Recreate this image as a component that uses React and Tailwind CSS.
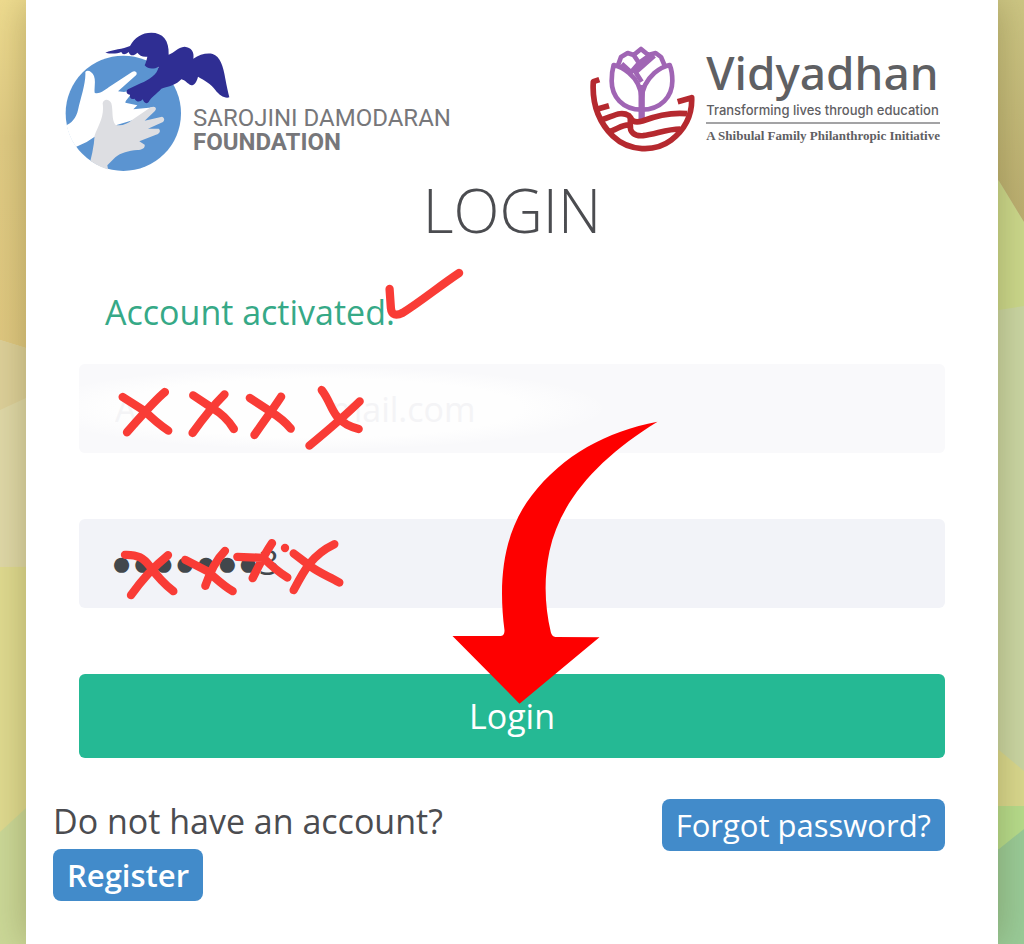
import React, { useState } from 'react';

const Backdrop = () => (
  <svg
    aria-hidden="true"
    viewBox="0 0 1024 944"
    preserveAspectRatio="none"
    className="absolute inset-0 w-full h-full"
  >
    <defs>
      <linearGradient id="sand" x1="0" y1="0" x2="0" y2="1">
        <stop offset="0" stopColor="#efdc90" />
        <stop offset="0.3" stopColor="#e0cb84" />
        <stop offset="1" stopColor="#dfc67e" />
      </linearGradient>
      <linearGradient id="olive" x1="0" y1="0" x2="0" y2="1">
        <stop offset="0" stopColor="#cdc684" />
        <stop offset="1" stopColor="#bbae70" />
      </linearGradient>
    </defs>
    <rect width="512" height="944" fill="#dfd8a8" />
    <path d="M0 0H512V460L26 348L0 340Z" fill="url(#sand)" />
    <path d="M0 340L26 348L512 460V300L26 398L0 410Z" fill="#ddd09a" />
    <path d="M0 567L512 564V944H0Z" fill="#dfda90" />
    <path d="M0 832L26 808L512 500V944H0Z" fill="#cbd898" />
    <rect x="512" width="512" height="944" fill="#cad6a4" />
    <path d="M999 181L1024 222V306L999 310L512 400V0Z" fill="#cbd88c" />
    <path d="M512 0H1024V222L999 181L900 90Z" fill="url(#olive)" />
    <path d="M512 600L999 750L1024 771V806H512Z" fill="#d9d88e" />
    <path d="M512 806H1024V944H512Z" fill="#b6dc8c" />
    <path d="M512 944V900L999 849L1024 829V944Z" fill="#99cb98" />
  </svg>
);

const FoundationLogo = () => (
  <div className="flex items-start">
    <svg viewBox="45 30 495 426" className="w-[165px] h-[142px] shrink-0" aria-hidden="true">
      <defs>
        <clipPath id="globe">
          <circle cx="220" cy="280" r="174" />
        </clipPath>
      </defs>
      <circle cx="220" cy="280" r="173" fill="#5b94d1" />
      <g clipPath="url(#globe)">
        <path
          d="M40 318C62 314 78 296 84 270C92 232 108 190 106 156C112 148 126 154 132 168C138 184 132 204 134 218C144 224 160 214 176 202L246 156C256 150 264 158 258 166L204 214L222 216L250 210C240 232 226 240 226 248L262 256L250 268L312 262C320 266 314 274 306 276L250 300L190 318L150 340L110 366L84 378L30 400Z"
          fill="#ffffff"
        />
        <path
          d="M110 460C124 420 132 380 134 346C144 318 164 290 158 250C160 236 178 236 184 250C190 272 184 298 196 314C212 320 232 312 246 300L302 262C316 256 322 266 314 274L284 302L336 290C346 294 344 306 334 308L294 326L326 326C334 332 328 342 318 344L268 364L284 374C286 384 276 390 262 390C236 392 212 398 196 412L172 436L176 460Z"
          fill="#dddee2"
        />
      </g>
      <path
        d="M166 98C190 88 218 88 240 78C254 52 276 38 304 38C338 38 358 60 356 104C374 98 382 82 404 80C424 82 434 96 430 116C448 104 470 98 488 102C510 108 520 140 526 176C530 198 534 216 538 232C524 236 508 226 496 210C482 190 464 182 444 170C440 186 434 196 424 196C412 192 406 180 394 178C380 194 356 200 334 206C320 222 304 230 296 246C288 254 282 248 278 238C270 248 258 246 254 236C244 240 238 234 240 224C230 224 226 214 234 208L272 190C298 178 322 164 326 140C312 148 294 148 284 136C288 126 290 120 292 110C278 112 268 106 262 98C250 110 240 108 236 96C226 104 218 106 214 96C200 102 182 102 166 98Z"
        fill="#2f2e93"
      />
    </svg>
    <div className="-ml-[37px] mt-[76px] font-['Roboto',sans-serif] text-[24px] leading-6 text-[#77777a] whitespace-nowrap">
      <div>SAROJINI DAMODARAN</div>
      <div className="font-bold">FOUNDATION</div>
    </div>
  </div>
);

const VidyadhanLogo = () => (
  <div className="flex items-start mt-[14px]">
    <svg viewBox="30 27 318 324" className="w-[106px] h-[108px] shrink-0" fill="none" aria-hidden="true">
      <g stroke="#a065b4" strokeWidth="14" strokeLinejoin="round">
        <path d="M188 224C130 224 98 184 98 138C98 118 100 104 104 90C120 94 136 102 150 114C174 134 186 158 188 190C190 158 204 134 226 114C240 102 256 94 272 90C278 104 280 118 280 138C280 184 246 224 188 224Z" />
        <path d="M188 150V252" strokeWidth="19" />
        <path d="M116 94L126 66L146 54L164 60L186 42L208 60L230 54L246 66L258 94" />
        <path d="M164 60L180 84L156 112L128 86M216 58L180 84M226 62L170 112L188 140" />
      </g>
      <g stroke="#b5292f" strokeWidth="17" strokeLinejoin="round">
        <path d="M61 134L43 140C38 214 66 268 102 304C150 350 228 352 276 316C322 280 340 238 338 188L296 200" />
        <path d="M56 222L90 212M68 254C100 246 124 226 150 242C158 256 164 266 190 258C232 242 282 232 324 236" />
        <path d="M88 290C112 286 130 266 154 270C152 290 164 304 192 302C230 298 262 282 304 282M154 242V280" />
      </g>
    </svg>
    <div className="ml-[11px] whitespace-nowrap text-[#5f6063]">
      <div className="font-['Noto_Sans',sans-serif] font-medium text-[46px] leading-[56px]">Vidyadhan</div>
      <div className="font-['Inter',sans-serif] font-medium text-[13px] leading-5">Transforming lives through education</div>
      <div className="mt-[2px] border-t-2 border-[#a3a3a5] font-['Liberation_Serif',serif] font-bold text-[13px] leading-6">
        A Shibulal Family Philanthropic Initiative
      </div>
    </div>
  </div>
);

const CheckStroke = () => (
  <svg
    viewBox="885 20 240 160"
    className="absolute left-full bottom-[12px] -ml-[10px] w-20 h-[53px] pointer-events-none"
    aria-hidden="true"
  >
    <path d="M898 86L902 144C904 166 918 168 938 158C990 126 1048 78 1108 38" fill="none" stroke="#f93c36" strokeWidth="25" strokeLinecap="round" strokeLinejoin="round" />
  </svg>
);

const EmailScribble = () => (
  <svg viewBox="120 70 760 210" className="absolute left-9 top-5 w-[253px] h-[70px] pointer-events-none" aria-hidden="true">
    <g fill="none" stroke="#f93c36" strokeWidth="25" strokeLinecap="round" strokeLinejoin="round">
      <path d="M143 109L208 150C234 176 256 194 280 210M270 94C236 122 198 168 156 215" />
      <path d="M355 104L412 142C446 162 462 180 477 205M449 101C414 136 378 182 353 217" />
      <path d="M525 112L586 152C612 168 632 184 648 204M619 108C594 146 566 184 539 223" />
      <path d="M741 88C762 114 768 144 786 166C806 190 826 198 852 205M855 122C808 168 756 212 704 255" />
    </g>
  </svg>
);

const PasswordScribble = () => (
  <svg viewBox="130 60 690 200" className="absolute left-[39px] top-4 w-[230px] h-[67px] pointer-events-none" aria-hidden="true">
    <g fill="none" stroke="#f93c36" strokeWidth="25" strokeLinecap="round" strokeLinejoin="round">
      <path d="M151 119C190 118 206 128 226 154C248 184 270 208 296 228M280 120C238 154 204 190 169 240" />
      <path d="M332 134L398 168C424 190 446 212 474 228M451 107C424 134 408 164 392 212" />
      <path d="M488 125L566 128C590 152 614 172 638 187M592 84C570 116 552 152 534 189" />
      <path d="M657 115L706 152C734 174 764 184 794 202M779 87C714 118 690 162 657 225" />
      <path d="M631 98V98.5" />
    </g>
  </svg>
);

const Arrow = () => (
  <svg
    viewBox="66 34 617 849"
    className="absolute left-1/2 -ml-[60px] -top-[253px] w-[206px] h-[283px] pointer-events-none"
    aria-hidden="true"
  >
    <path
      d="M682 36C528 66 400 134 304 258C224 362 202 500 223 662C223 672 220 679 212 679H67L268 882L508 683L376 682C368 682 364 676 362 668C344 590 340 510 358 424C392 268 510 142 682 36Z"
      fill="#fe0000"
    />
  </svg>
);

const App = () => {
  const [email, setEmail] = useState('A                      mail.com');
  const [password, setPassword] = useState('●●●●●●●3');

  return (
    <div className="relative min-h-screen flex bg-[#dfd8a8] font-['Open_Sans','Liberation_Sans',sans-serif] text-[34px] text-[#4b4c50]">
      <Backdrop />
      <main className="relative flex-1 min-w-0 mx-[26px] px-[27px] pt-[30px] pb-10 bg-white shadow-[0_0_36px_rgba(90,80,30,0.35)]">
        <header className="flex items-start justify-between pl-3 pr-[31px]">
          <FoundationLogo />
          <VidyadhanLogo />
        </header>

        <h1 className="mt-2 text-center font-light text-[60px] leading-[60px]">LOGIN</h1>

        <form className="px-[26px] mt-[52px]" onSubmit={(e) => e.preventDefault()}>
          <p className="ml-[26px] leading-10 text-[#36a987]">
            <span className="relative inline-block">
              Account activated.
              <CheckStroke />
            </span>
          </p>

          <div className="mt-8 flex flex-col gap-[66px]">
            <div className="relative">
              <input
                type="text"
                aria-label="Email"
                value={email}
                onChange={(e) => setEmail(e.target.value)}
                className="block w-full h-[89px] px-9 rounded-md text-[#f4f4f6] bg-[#f9f9fb] bg-[radial-gradient(ellipse_290px_42px_at_240px_44px,#fefefe_70%,transparent)] focus:outline-none"
              />
              <EmailScribble />
            </div>
            <div className="relative">
              <input
                type="text"
                aria-label="Password"
                value={password}
                onChange={(e) => setPassword(e.target.value)}
                className="block w-full h-[89px] px-8 pb-1 rounded-md text-[35px] text-[#42474c] bg-[#f2f3f8] focus:outline-none"
              />
              <PasswordScribble />
            </div>
            <div className="relative">
              <button type="submit" className="block w-full h-[84px] rounded-md bg-[#25b994] text-white">
                Login
              </button>
              <Arrow />
            </div>
          </div>
        </form>

        <footer className="mt-[41px] pr-[26px] flex items-start justify-between">
          <div>
            <p className="leading-[44px]">Do not have an account?</p>
            <a href="#register" className="mt-[6px] inline-block h-[52px] px-[14px] rounded-lg bg-[#428bca] text-white font-semibold text-[31px] leading-[52px]">
              Register
            </a>
          </div>
          <a href="#forgot" className="h-[52px] px-[14px] rounded-lg bg-[#428bca] text-white text-[31px] leading-[52px]">
            Forgot password?
          </a>
        </footer>
      </main>
    </div>
  );
};

export default App;
